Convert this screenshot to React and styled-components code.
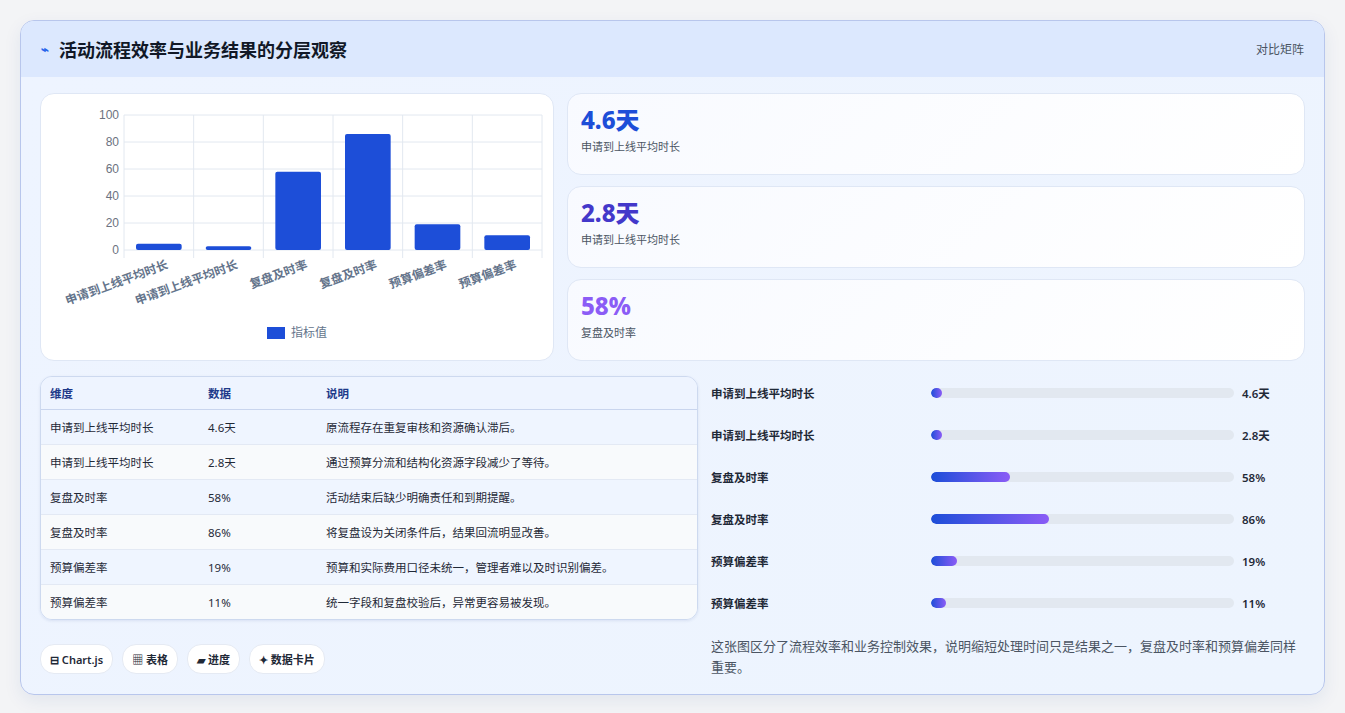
import styled, { createGlobalStyle } from "styled-components";

const Global = createGlobalStyle`
  body {
    margin: 0;
    background: #f3f4f6;
    font-family: "Noto Sans", "Noto Sans CJK SC", sans-serif;
  }
`;

const Page = styled.div`
  padding: 20px 20px 22px 20px;
  background: #f3f4f6;
`;

const Card = styled.div`
  border: 1px solid #b8c6ec;
  border-radius: 14px;
  background: linear-gradient(135deg, #eef4ff, #edf4fe);
  overflow: hidden;
  box-shadow: 0 6px 18px rgba(30, 58, 138, 0.08);
`;

const Header = styled.div`
  height: 56px;
  background: #dce8fe;
  display: flex;
  align-items: center;
  justify-content: space-between;
  padding: 0 20px;
`;

const Title = styled.h1`
  margin: 0;
  font-size: 18px;
  font-weight: 700;
  color: #111827;
  display: flex;
  align-items: center;
  gap: 10px;
`;

const Icon = styled.span`
  color: #2563eb;
  font-size: 13px;
`;

const Tag = styled.span`
  font-size: 12px;
  color: #4b5563;
`;

const Body = styled.div`
  padding: 16px 19px 16px 19px;
  display: flex;
  flex-direction: column;
  gap: 15px;
`;

const Row = styled.div`
  display: grid;
  grid-template-columns: ${(p) => p.$cols};
  column-gap: 13px;
`;

const Panel = styled.div`
  background: #fff;
  border: 1px solid #dfe7f5;
  border-radius: 14px;
  height: 268px;
  box-sizing: border-box;
`;

const Stats = styled.div`
  display: flex;
  flex-direction: column;
  gap: 11px;
`;

const Stat = styled.div`
  height: 82px;
  box-sizing: border-box;
  background: linear-gradient(135deg, #f8faff, #fff);
  border: 1px solid #dfe7f5;
  border-radius: 14px;
  padding: 10px 13px;
`;

const StatValue = styled.div`
  font-size: 24px;
  font-weight: 800;
  line-height: 32px;
  color: ${(p) => p.$color};
`;

const StatLabel = styled.div`
  font-size: 11px;
  color: #4b5563;
  margin-top: 2px;
`;

const Table = styled.table`
  width: 100%;
  border-collapse: separate;
  border-spacing: 0;
  border: 1px solid #cdd9ef;
  border-radius: 12px;
  overflow: hidden;
  font-size: 11.5px;
  box-shadow: 0 1px 3px rgba(30, 58, 138, 0.1);
`;

const Th = styled.th`
  text-align: left;
  font-weight: 600;
  color: #1e3a8a;
  height: 32px;
  padding: 0 9px;
  background: #eef4ff;
  border-bottom: 1px solid #c9d5ee;
`;

const Td = styled.td`
  height: 34px;
  padding: 0 9px;
  color: #1f2937;
  border-bottom: 1px solid #e3e9f4;
  background: ${(p) => (p.$odd ? "#eff5ff" : "#f8fafc")};
  tr:last-child & {
    border-bottom: none;
  }
`;

const Progress = styled.div`
  display: flex;
  flex-direction: column;
`;

const PRow = styled.div`
  height: 42px;
  display: grid;
  grid-template-columns: 220px 303px 1fr;
  align-items: center;
  font-size: 11.5px;
  font-weight: 600;
  color: #1f2937;
  &:first-child {
    margin-top: -4px;
  }
`;

const Track = styled.div`
  height: 10px;
  border-radius: 5px;
  background: #e2e8f0;
  overflow: hidden;
`;

const Fill = styled.div`
  height: 100%;
  border-radius: 5px;
  background: linear-gradient(90deg, #1d4ed8, #8b5cf6);
`;

const Value = styled.span`
  padding-left: 8px;
`;

const Note = styled.p`
  margin: 12px 0 0;
  font-size: 13px;
  line-height: 21px;
  color: #4b5563;
`;

const Chips = styled.div`
  display: flex;
  gap: 9px;
  margin-top: 24px;
`;

const Chip = styled.span`
  background: #fff;
  border: 1px solid #e5eaf3;
  border-radius: 14px;
  height: 28px;
  padding: 0 9px;
  display: inline-flex;
  align-items: center;
  gap: 4px;
  font-size: 11px;
  font-weight: 600;
  color: #1f2937;
`;

const Left = styled.div``;

const bars = [4.6, 2.8, 58, 86, 19, 11];
const cats = ["申请到上线平均时长", "申请到上线平均时长", "复盘及时率", "复盘及时率", "预算偏差率", "预算偏差率"];

const rows = [
  ["申请到上线平均时长", "4.6天", "原流程存在重复审核和资源确认滞后。"],
  ["申请到上线平均时长", "2.8天", "通过预算分流和结构化资源字段减少了等待。"],
  ["复盘及时率", "58%", "活动结束后缺少明确责任和到期提醒。"],
  ["复盘及时率", "86%", "将复盘设为关闭条件后，结果回流明显改善。"],
  ["预算偏差率", "19%", "预算和实际费用口径未统一，管理者难以及时识别偏差。"],
  ["预算偏差率", "11%", "统一字段和复盘校验后，异常更容易被发现。"],
];

const progress = [
  ["申请到上线平均时长", 3.5, "4.6天"],
  ["申请到上线平均时长", 3.5, "2.8天"],
  ["复盘及时率", 26, "58%"],
  ["复盘及时率", 39, "86%"],
  ["预算偏差率", 8.5, "19%"],
  ["预算偏差率", 5, "11%"],
];

function Chart() {
  const x0 = 83, x1 = 501, y0 = 21, y1 = 156;
  const w = (x1 - x0) / 6;
  return (
    <svg width="512" height="266" style={{ display: "block" }}>
      {[0, 20, 40, 60, 80, 100].map((v) => {
        const y = y1 - (v / 100) * (y1 - y0);
        return (
          <g key={v}>
            <line x1={x0} x2={x1} y1={y} y2={y} stroke="#e2e8f0" />
            <text x={x0 - 5} y={y + 4} textAnchor="end" fontSize="12" fill="#6b7280" fontFamily="Liberation Sans, sans-serif">{v}</text>
          </g>
        );
      })}
      {[0, 1, 2, 3, 4, 5, 6].map((i) => (
        <line key={i} x1={x0 + i * w} x2={x0 + i * w} y1={y0} y2={y1 + 8} stroke="#e2e8f0" />
      ))}
      {bars.map((v, i) => {
        const h = (v / 100) * (y1 - y0);
        return <rect key={i} x={x0 + i * w + 12} y={y1 - h} width={w - 24} height={h} rx="2" fill="#1d4ed8" />;
      })}
      {cats.map((c, i) => (
        <text key={i} transform={`translate(${x0 + i * w + w / 2 + 10},${y1 + 18}) rotate(-20)`} textAnchor="end" fontSize="12" fontWeight="600" fill="#64748b">{c}</text>
      ))}
      <rect x="226" y="233" width="18" height="12" fill="#1d4ed8" />
      <text x="250" y="243" fontSize="12" fill="#64748b">指标值</text>
    </svg>
  );
}

export default function App() {
  return (
    <Page>
      <Global />
      <Card>
        <Header>
          <Title><Icon>⌁</Icon>活动流程效率与业务结果的分层观察</Title>
          <Tag>对比矩阵</Tag>
        </Header>
        <Body>
          <Row $cols="514px 1fr">
            <Panel><Chart /></Panel>
            <Stats>
              <Stat><StatValue $color="#1d4ed8">4.6天</StatValue><StatLabel>申请到上线平均时长</StatLabel></Stat>
              <Stat><StatValue $color="#4338ca">2.8天</StatValue><StatLabel>申请到上线平均时长</StatLabel></Stat>
              <Stat><StatValue $color="#8b5cf6">58%</StatValue><StatLabel>复盘及时率</StatLabel></Stat>
            </Stats>
          </Row>
          <Row $cols="658px 1fr">
            <Left>
              <Table>
                <thead>
                  <tr><Th style={{ width: 140 }}>维度</Th><Th style={{ width: 100 }}>数据</Th><Th>说明</Th></tr>
                </thead>
                <tbody>
                  {rows.map((r, i) => (
                    <tr key={i}>
                      {r.map((c, j) => <Td key={j} $odd={i % 2 === 0}>{c}</Td>)}
                    </tr>
                  ))}
                </tbody>
              </Table>
              <Chips>
                <Chip>⊟ Chart.js</Chip>
                <Chip>▦ 表格</Chip>
                <Chip>▰ 进度</Chip>
                <Chip>✦ 数据卡片</Chip>
              </Chips>
            </Left>
            <Progress>
              {progress.map(([l, p, v], i) => (
                <PRow key={i}>
                  <span>{l}</span>
                  <Track><Fill style={{ width: `${p}%` }} /></Track>
                  <Value>{v}</Value>
                </PRow>
              ))}
              <Note>这张图区分了流程效率和业务控制效果，说明缩短处理时间只是结果之一，复盘及时率和预算偏差同样重要。</Note>
            </Progress>
          </Row>
        </Body>
      </Card>
    </Page>
  );
}
